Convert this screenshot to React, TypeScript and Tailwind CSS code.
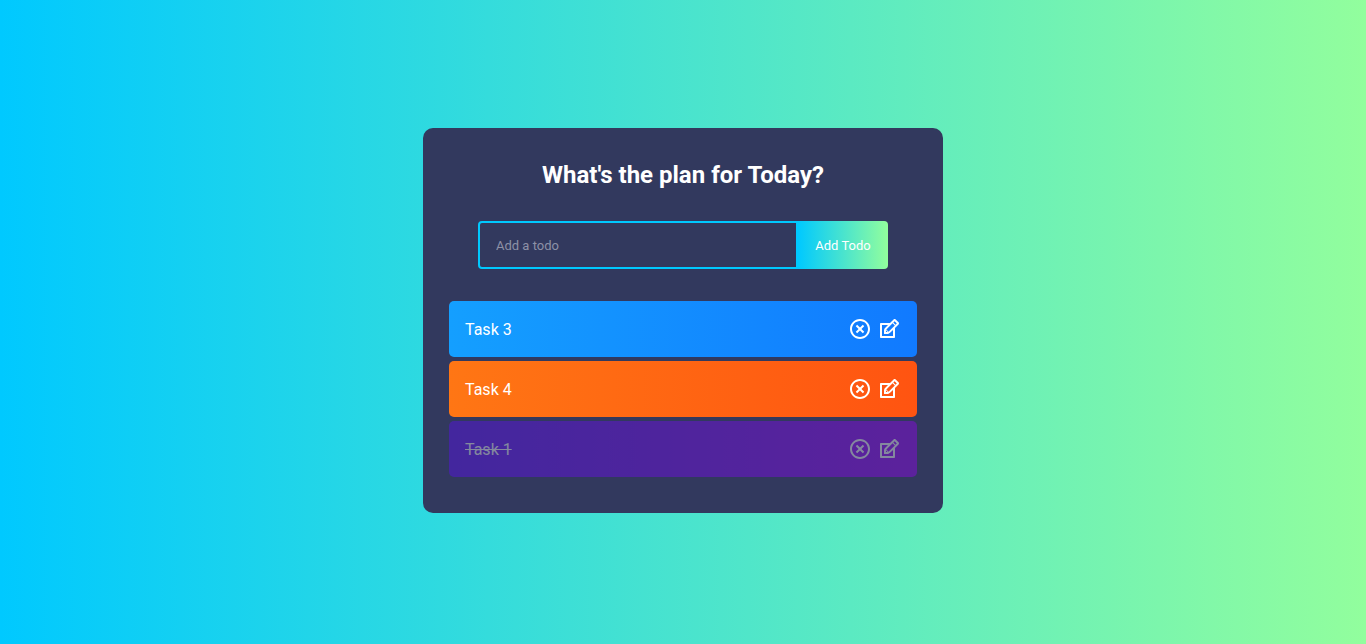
import { useState } from 'react';
import { RiCloseCircleLine } from 'react-icons/ri';
import { TiEdit } from 'react-icons/ti';

type Todo = { id: number; text: string; done: boolean; color: string };

const initialTodos: Todo[] = [
  { id: 3, text: 'Task 3', done: false, color: 'bg-[linear-gradient(90deg,#149fff_0%,#117aff_100%)]' },
  { id: 4, text: 'Task 4', done: false, color: 'bg-[linear-gradient(90deg,#ff7614_0%,#ff5411_100%)]' },
  { id: 1, text: 'Task 1', done: true, color: 'bg-[linear-gradient(90deg,#5d0cff_0%,#9b00fa_100%)]' },
];

export default function App() {
  const [todos, setTodos] = useState(initialTodos);
  const [value, setValue] = useState('');

  const add = () => {
    if (!value.trim()) return;
    const id = Date.now();
    setTodos([{ id, text: value, done: false, color: initialTodos[todos.length % 3].color }, ...todos]);
    setValue('');
  };

  return (
    <div className="min-h-screen bg-[linear-gradient(90deg,#00c9ff_0%,#92fe9d_100%)] px-4 pt-32 pb-32 font-['Roboto',sans-serif]">
      <main className="mx-auto max-w-[520px] rounded-[10px] bg-[#32395e] px-[26px] pb-9 text-center text-white">
        <h1 className="pt-8 pb-[31px] text-2xl leading-[30px] font-bold">What's the plan for Today?</h1>
        <form
          className="mb-8 flex justify-center"
          onSubmit={(e) => {
            e.preventDefault();
            add();
          }}
        >
          <input
            aria-label="Add a todo"
            placeholder="Add a todo"
            value={value}
            onChange={(e) => setValue(e.target.value)}
            className="h-12 w-80 min-w-0 rounded-l-[4px] border-2 border-[#00c9ff] bg-transparent py-3 pr-8 pl-4 text-[13px] text-white outline-none placeholder:text-[#8d91a6]"
          />
          <button
            type="submit"
            className="h-12 w-[90px] shrink-0 cursor-pointer rounded-r-[4px] bg-[linear-gradient(90deg,#00c9ff_0%,#92fe9d_100%)] pt-0.5 text-[13px] text-white"
          >
            Add Todo
          </button>
        </form>
        <ul className="flex flex-col gap-1">
          {todos.map((todo) => (
            <li
              key={todo.id}
              className={`flex items-center justify-between rounded-[5px] p-4 ${todo.color} ${todo.done ? 'line-through opacity-40' : ''}`}
            >
              <button
                type="button"
                className="cursor-pointer pt-0.5 text-base leading-5"
                onClick={() => setTodos(todos.map((t) => (t.id === todo.id ? { ...t, done: !t.done } : t)))}
              >
                {todo.text}
              </button>
              <div className="flex items-center gap-[5px]">
                <button type="button" aria-label="Delete" className="cursor-pointer" onClick={() => setTodos(todos.filter((t) => t.id !== todo.id))}>
                  <RiCloseCircleLine size={24} />
                </button>
                <button
                  type="button"
                  aria-label="Edit"
                  className="cursor-pointer"
                  onClick={() => {
                    setValue(todo.text);
                    setTodos(todos.filter((t) => t.id !== todo.id));
                  }}
                >
                  <TiEdit size={24} />
                </button>
              </div>
            </li>
          ))}
        </ul>
      </main>
    </div>
  );
}
